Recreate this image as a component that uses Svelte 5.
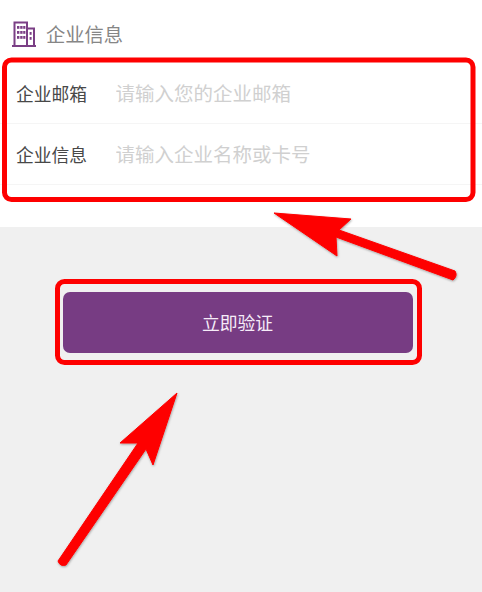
<script>
  const rows = [
    { label: '企业邮箱', placeholder: '请输入您的企业邮箱' },
    { label: '企业信息', placeholder: '请输入企业名称或卡号' }
  ];
</script>

<main class="page">
  <section class="form">
    <header class="head">
      <svg class="icon" viewBox="0 0 24 26" width="24" height="26" aria-hidden="true">
        <g fill="none" stroke="#7b3f85" stroke-width="2">
          <path d="M0 25H24" />
          <path d="M2.5 25V1.5H15V25" />
          <path d="M15 7.5H22V25" />
        </g>
        <g fill="#7b3f85">
          <rect x="5" y="5" width="2.4" height="2.8" /><rect x="8.2" y="5" width="2.4" height="2.8" /><rect x="11.2" y="5" width="2.2" height="2.8" />
          <rect x="5" y="10" width="2.4" height="2.8" /><rect x="8.2" y="10" width="2.4" height="2.8" /><rect x="11.2" y="10" width="2.2" height="2.8" />
          <rect x="5" y="15" width="2.4" height="2.8" /><rect x="8.2" y="15" width="2.4" height="2.8" /><rect x="11.2" y="15" width="2.2" height="2.8" />
          <rect x="17.6" y="11" width="2" height="2.8" /><rect x="17.6" y="16" width="2" height="2.8" />
        </g>
      </svg>
      <h2>企业信息</h2>
    </header>
    {#each rows as row}
      <label class="row">
        <span class="name">{row.label}</span>
        <input type="text" placeholder={row.placeholder} />
      </label>
    {/each}
  </section>

  <section class="action">
    <button type="button">立即验证</button>
  </section>

  <svg class="marks" viewBox="0 0 482 592" width="482" height="592" aria-hidden="true">
    <defs>
      <filter id="soft" x="-10%" y="-10%" width="120%" height="120%">
        <feDropShadow dx="0.5" dy="1" stdDeviation="1" flood-color="#000" flood-opacity="0.35" />
      </filter>
    </defs>
    <rect x="4.5" y="60" width="468.5" height="139.5" rx="7" fill="none" stroke="#fe0000" stroke-width="5" />
    <rect x="57.5" y="281.5" width="362" height="81" rx="7" fill="none" stroke="#fe0000" stroke-width="5" />
    <g fill="#fe0000" stroke="#fe0000" stroke-linejoin="round" filter="url(#soft)">
      <path stroke-width="1" d="M274 213L351 219L339 230L455 271Q458 276 453 280L336 237L337 256Z" />
      <path stroke-width="1" d="M177 393L153 465L146 449L66 565Q60 567 58 561L138 443L120 443Z" />
    </g>
  </svg>
</main>

<style>
  :global(body) {
    margin: 0;
  }

  .page {
    position: relative;
    width: 482px;
    height: 592px;
    overflow: hidden;
    display: flex;
    flex-direction: column;
    background: #f0f0f0;
    font-family: "Noto Sans CJK SC", "Noto Sans", sans-serif;
  }

  .form {
    height: 227px;
    flex: none;
    box-sizing: border-box;
    background: #fff;
  }

  .head {
    height: 63px;
    box-sizing: border-box;
    padding: 5px 0 0 12px;
    display: flex;
    align-items: center;
    gap: 10px;
  }

  .icon {
    flex: none;
  }

  h2 {
    margin: 0;
    font-size: 19.3px;
    font-weight: 400;
    color: #868686;
  }

  .row {
    height: 61px;
    box-sizing: border-box;
    display: flex;
    align-items: center;
    padding: 0 0 1px 16px;
    border-bottom: 1px solid #f5f5f5;
  }

  .name {
    width: 99.5px;
    flex: none;
    font-size: 17.8px;
    color: #484848;
  }

  input {
    flex: 1;
    min-width: 0;
    padding: 0;
    border: 0;
    outline: 0;
    background: transparent;
    font: inherit;
    font-size: 19.5px;
  }

  input::placeholder {
    color: #d0d0d0;
    opacity: 1;
  }

  .action {
    display: flex;
    justify-content: flex-start;
    padding: 65px 0 0 63px;
  }

  button {
    width: 350px;
    height: 61px;
    padding: 0 1px 2px 0;
    border: 0;
    border-radius: 7px;
    background: #773c83;
    color: #f6ecf8;
    font: inherit;
    font-size: 17.8px;
  }

  .marks {
    position: absolute;
    inset: 0;
    pointer-events: none;
  }
</style>
